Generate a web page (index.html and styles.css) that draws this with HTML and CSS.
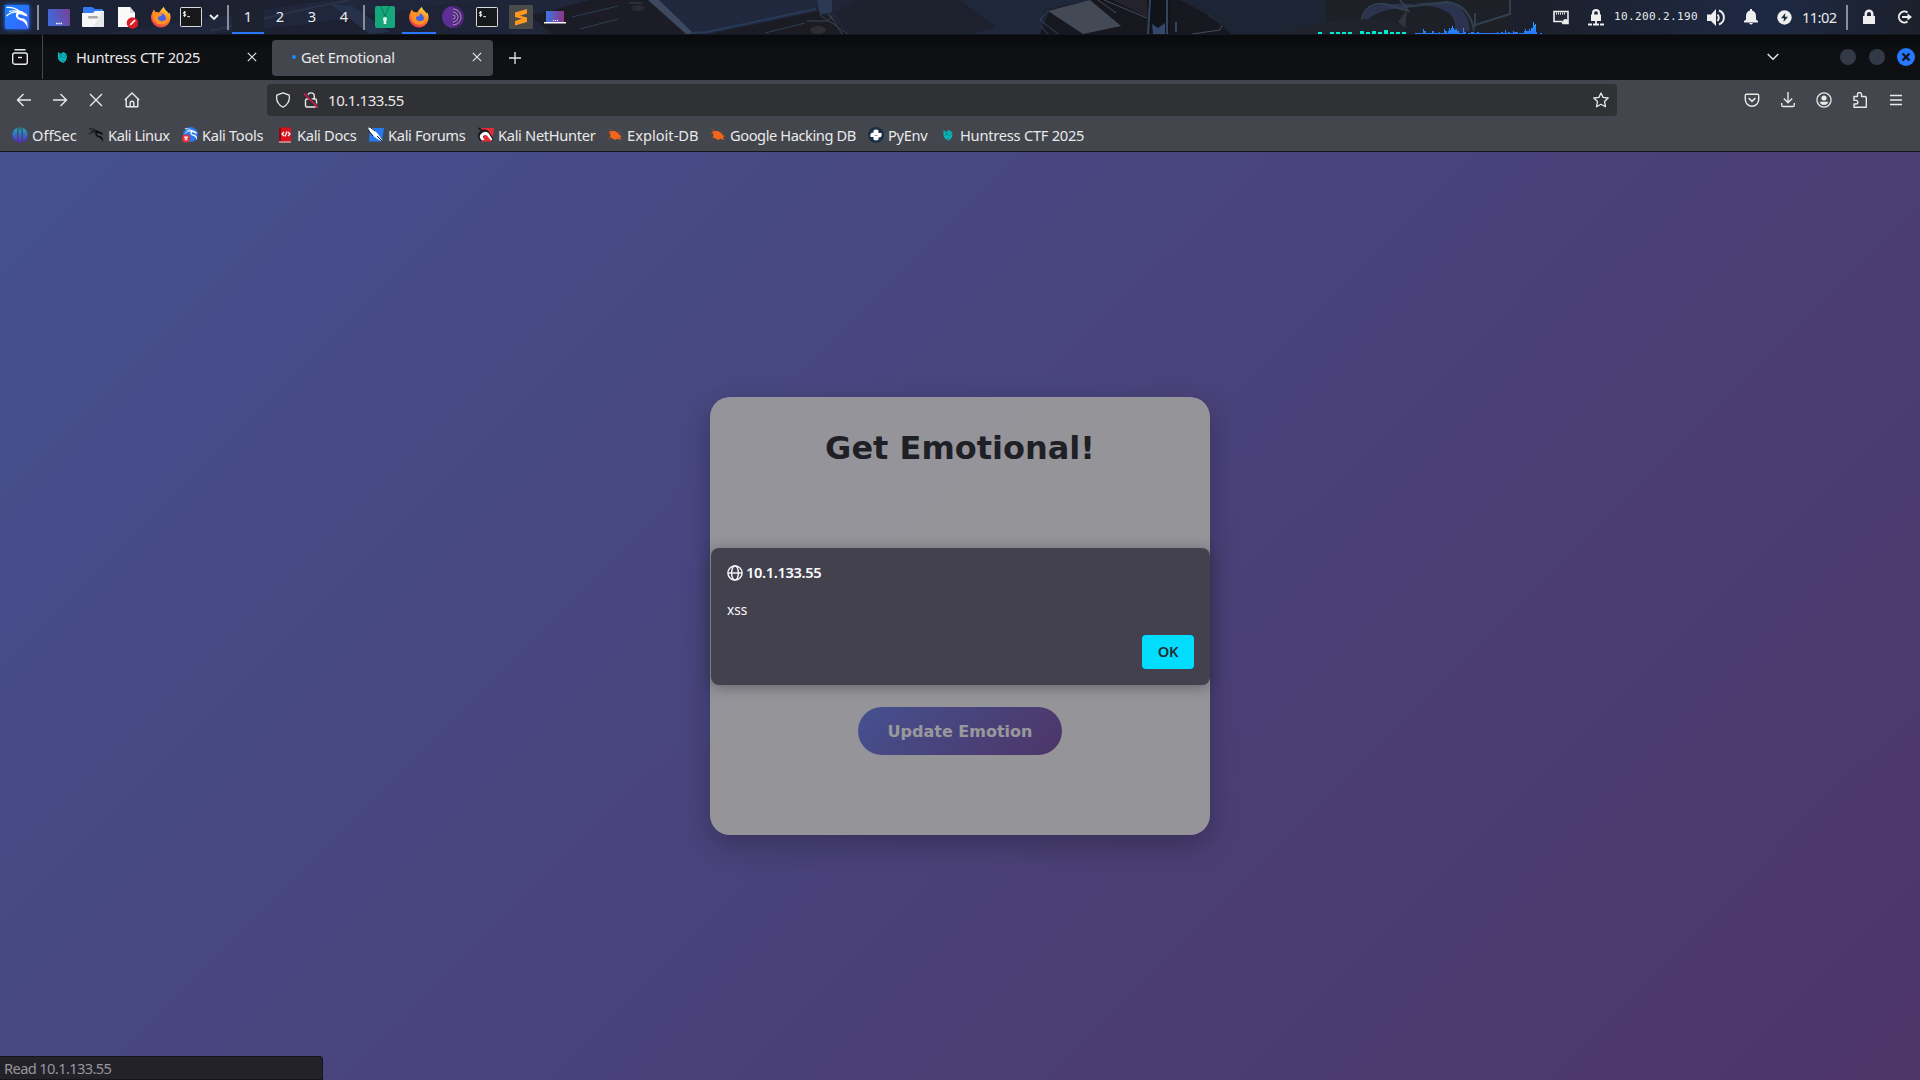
FILE: index.html
```html
<!DOCTYPE html>
<html lang="en">
<head>
<meta charset="utf-8">
<title>Get Emotional</title>
<link rel="stylesheet" href="styles.css">
</head>
<body>
<svg width="0" height="0" class="defs" aria-hidden="true">
  <defs>
    <linearGradient id="gBlue" x1="0" y1="0" x2="1" y2="1"><stop offset="0" stop-color="#1682ff"/><stop offset="1" stop-color="#3a66ff"/></linearGradient>
    <linearGradient id="gDesk" x1="0" y1="0.6" x2="1" y2="0.3"><stop offset="0" stop-color="#3f6bdc"/><stop offset="1" stop-color="#74429c"/></linearGradient>
    <linearGradient id="gLap" x1="0" y1="0" x2="1" y2="0"><stop offset="0" stop-color="#3c75e6"/><stop offset="1" stop-color="#8f3583"/></linearGradient>
    <linearGradient id="gFox" x1="0.8" y1="0" x2="0.3" y2="1"><stop offset="0" stop-color="#ffe14a"/><stop offset="0.45" stop-color="#ff8a24"/><stop offset="1" stop-color="#f23352"/></linearGradient>
    <linearGradient id="gOff" x1="0" y1="0" x2="0" y2="1"><stop offset="0" stop-color="#13b3b9"/><stop offset="1" stop-color="#5c22d0"/></linearGradient>
    <linearGradient id="gNet" x1="0" y1="0" x2="0" y2="1"><stop offset="0" stop-color="#22a2ff"/><stop offset="1" stop-color="#2777ff"/></linearGradient>
    <linearGradient id="gWall" x1="0" y1="0" x2="1" y2="0"><stop offset="0" stop-color="#1d2439"/><stop offset="0.15" stop-color="#1c2030"/><stop offset="0.3" stop-color="#20273b"/><stop offset="0.5" stop-color="#1f2434"/><stop offset="0.8" stop-color="#1c202c"/><stop offset="0.92" stop-color="#1d2943"/><stop offset="1" stop-color="#1c202c"/></linearGradient>
    <symbol id="dragon" viewBox="0 0 24 24"><path d="M1.500 2.500Q9 2 14.500 6.500M4 6.500Q9 5 14 6.500M1.500 11Q6 6.500 14 7" fill="none" stroke="currentColor" stroke-width="1.200"/><path d="M13 5.500Q17 5.500 18 7L21.500 9 22.500 11.500 20.500 11 17.500 10 16.500 9.500Q13.500 8.500 13 10.500 13 12.500 16 13 21.500 13.500 22.300 18.500L22.500 23Q21 18 17.500 16 12 14.500 11 11.500 10.300 8 13 5.500Z" fill="currentColor"/></symbol>
    <symbol id="firefox" viewBox="0 0 22 22"><path d="M11 21.500A10 10 0 0 1 1 11.500C1 8 2.600 6 3.800 3.500L5.500 6 9 6.500C10.500 5.500 11 3 14 .800 14 3.500 17.500 5 18.500 7.500L19.500 6.500C22.500 13 19 21.500 11 21.500Z" fill="url(#gFox)"/><circle cx="11.300" cy="12.200" r="4.600" fill="#4364e6"/><path d="M3 7Q6 5.500 9 7L12.500 8.700 10 10.500 8 10.700Q7.300 14 11 15 15 16 18 12 17 19 11 19 3.500 18 3 10Z" fill="#ff9125"/></symbol>
    <symbol id="terminal" viewBox="0 0 22 20"><rect x="0.500" y="0.500" width="21" height="19" rx="0.800" fill="#171819" stroke="#d8d9da"/><path d="M6 5.200H4.200Q3.300 5.200 3.300 6T4.200 6.900 5.800 7.600 5 8.600H3.200M4.600 4V10M7.200 9.700H10" stroke="#eee" fill="none" stroke-width="1"/></symbol>
    <symbol id="cross" viewBox="0 0 12 12"><path d="M1 1L11 11M11 1L1 11" stroke="currentColor" fill="none" stroke-width="1.400"/></symbol>
    <symbol id="padlock" viewBox="0 0 14 16"><path d="M1 7H2.500V5A4.500 4.500 0 0 1 11.500 5V7H13V15H1ZM5 7H9V5A2 2 0 0 0 5 5Z" fill="currentColor" fill-rule="evenodd"/></symbol>
    <symbol id="huntress" viewBox="0 0 12 14"><path d="M1 1L4 3 7 1 10 3 11 6 10 10 7 13 3 11 1 8Z" fill="#09b9bc"/><path d="M2 3L5 5 7 3M2 7L5 6 8 8M5 10L8 11M9 4V7" stroke="#087780" fill="none"/></symbol>
    <symbol id="exploit" viewBox="0 0 16 14"><path d="M2 3.500L5 3 8 3 11 5 13 7.500 15.500 8 13 9 14 12 10.500 10.800 8 12 4.500 10 2.500 9.500 3.500 7Z" fill="#f2661c"/><path d="M2 1L5 3M0 5L3 5.500M12 3L12 6M1 11L4 9" stroke="#8a4a30" fill="none"/></symbol>
  </defs>
</svg>

<header class="taskbar">
  <svg class="wallpaper" viewBox="0 0 1920 34" preserveAspectRatio="none">
    <rect width="1920" height="34" fill="url(#gWall)"/>
    <path d="M95 35L330 0H480L300 25 200 35Z" fill="#20273c"/>
    <path d="M210 31L310 8 350 0" stroke="#2a3248" stroke-width="2" fill="none"/>
    <path d="M330 4L352 6 390 32 370 34Z" fill="#26314b"/>
    <path d="M530 16L590 0H648L686 34H552Z" fill="#1b1c25"/>
    <path d="M650 0L692 34H707L817 8V0Z" fill="#1f283c"/>
    <path d="M648 0L686 34H694L659 0Z" fill="#3c495e"/>
    <path d="M690 33L707 32 816 9" stroke="#293a57" stroke-width="2" fill="none"/>
    <path d="M710 34L820 11 850 34Z" fill="#1a1b23"/>
    <path d="M572 17L618 6M580 29L618 19M765 33L805 23" stroke="#2c4054" fill="none"/>
    <path d="M629 3H642M807 21H828L832 16M820 15L848 34M829 14L842 34" stroke="#3d4450" stroke-width="1" fill="none"/>
    <ellipse cx="638" cy="8" rx="7" ry="3" fill="#2b2a33"/><ellipse cx="818" cy="30" rx="8" ry="4" fill="#302c34"/>
    <path d="M817 0H832V12L820 15Z" fill="#2c3953"/>
    <path d="M835 12L860 0H960L995 27 970 34H849Z" fill="#1c212d"/>
    <path d="M960 0H1090L1045 9 1040 34H972L996 27Z" fill="#1f273a"/>
    <path d="M1040 34L1050 10 1090 0H1190L1208 15 1232 34Z" fill="#17181f"/>
    <path d="M1048 11L1090 0 1121 26 1083 34Z" fill="#444956"/>
    <path d="M1048 11L1040 20 1058 34M1041 26L1048 34" stroke="#384458" fill="none"/>
    <path d="M1098 0L1116 13M1104 0L1147 18M1192 34L1220 30 1222 25 1208 15" stroke="#464c58" stroke-width="1" fill="none"/>
    <path d="M1113 0L1147 17V0Z" fill="#24232b"/>
    <path d="M1147 0H1170V34H1151Z" fill="#11131b"/><path d="M1152 24L1158 28 1165 23V34H1153Z" fill="#34466b"/>
    <path d="M1150 0L1148 34M1167 0V34M1176 22V32" stroke="#33445f" stroke-width="2" fill="none"/>
    <path d="M1180 0H1325V34H1232L1208 15Z" fill="#1d2433"/>
    <path d="M1326 0H1510V34H1325Z" fill="#1e2028"/>
    <path d="M1364 17Q1366 7 1380 5T1414 4L1406 9Q1384 6 1364 22ZM1414 3L1450 2Q1468 8 1470 31L1454 34Q1460 13 1435 7Z" fill="#2b334f"/>
    <path d="M1361 22Q1365 2 1385 4L1408 11 1400 0M1405 7L1447 2Q1470 5 1474 31M1475 25L1510 14V0M1475 13V27" stroke="#31404f" stroke-width="2" fill="none"/>
    <path d="M1407 11L1405 28 1398 22 1404 14" fill="#34343c"/>
    <path d="M1282 34L1325 22 1388 18 1404 28V34Z" fill="#20222c"/>
    <path d="M1318 32h4v2h-4zm12 0h4v2h-4zm6 0h4v2h-4zm6 0h4v2h-4zm6 0h4v2h-4zm12-1h4v3h-4zm6 1h4v2h-4zm6-1h4v3h-4zm6 1h4v2h-4zm6-2h4v4h-4zm6 2h4v2h-4zm6 0h4v2h-4zm6 0h4v2h-4z" fill="#00ead2"/>
    <path d="M1415 34V33H1423V29H1424V31H1426V33H1432V31H1434V33H1439V32H1440V33H1444V29H1445V31H1447V33H1448V31H1449V28H1450V30H1451V28H1452V26H1453V28H1454V30L1457 29V31H1459V33H1463V28H1464V32H1466V34ZM1468 34V33H1471V32H1474V33H1477V32H1479V33H1497V32H1498V33H1501V32H1503V33H1505V30H1506V33L1510 32V33H1513V31H1514V32H1518V34ZM1519 34V33H1524V31H1525V29H1526V31H1529V29H1530V31H1531V28H1533V22H1534V25H1535V24H1536V32H1537V34ZM1540 33H1542V34H1540Z" fill="url(#gNet)"/>
  </svg>
  <div class="slot"><svg class="kali" viewBox="0 0 24 24"><rect width="24" height="24" rx="1" fill="url(#gBlue)"/><use href="#dragon" width="24" height="24" color="#fff"/></svg></div>
  <i class="sep"></i>
  <div class="slot"><svg width="22" height="18" viewBox="0 0 22 18"><rect y="1" width="22" height="17" rx="1" fill="url(#gDesk)"/><path d="M8 15.500h1.500m.800 0h1.500m.800 0h1.500" stroke="#fff" stroke-width="1.500"/></svg></div>
  <div class="slot"><svg width="22" height="20" viewBox="0 0 22 20"><path d="M1 6V1Q1 0 2 0H10L13 2H20Q21 2 21 3V6Z" fill="#347af2"/><path d="M0 6H11L13 4H22V19Q22 20 21 20H1Q0 20 0 19Z" fill="#f6f6f7"/><path d="M20 5L11 20H21L22 19V5Z" fill="#e8e8e9"/><rect x="6" y="9" width="10" height="2.500" rx="1.200" fill="#a7a7ab"/></svg></div>
  <div class="slot slot-doc"><svg width="20" height="24" viewBox="0 0 20 24"><path d="M0 2H12L17 8V22H0Z" fill="#fafafa"/><path d="M12 2V8H17Z" fill="#d7d7d9"/><circle cx="14.500" cy="18" r="5.800" fill="#d81c25"/><path d="M11.500 20.500L12.500 18.500 16.500 14.500 17.700 15.700 13.500 19.700Z" fill="#fff"/></svg></div>
  <div class="slot"><svg width="22" height="22"><use href="#firefox"/></svg></div>
  <div class="slot slot-term"><svg width="22" height="20"><use href="#terminal"/></svg></div>
  <div class="slot slot-arrow"><svg width="10" height="6" viewBox="0 0 10 6"><path d="M1 1L5 5 9 1" fill="none" stroke="#eee" stroke-width="1.800"/></svg></div>
  <i class="sep"></i>
  <span class="ws current">1</span><span class="ws">2</span><span class="ws">3</span><span class="ws">4</span>
  <i class="sep"></i>
  <div class="slot"><svg width="20" height="22" viewBox="0 0 20 22"><rect width="20" height="22" rx="2" fill="#15a67c"/><path d="M6 0L9.500 9V12M14 0L10.500 9V12" fill="none" stroke="#0b7456" stroke-dasharray="1.500 .800" stroke-width="1.300"/><path d="M10 12V18" stroke="#dff5ee" stroke-width="2.600"/><circle cx="10" cy="13" r="2" fill="#dff5ee"/></svg></div>
  <div class="slot running"><svg width="22" height="22"><use href="#firefox"/></svg></div>
  <div class="slot"><svg width="22" height="22" viewBox="0 0 22 22"><circle cx="11" cy="11" r="11" fill="#5d2f94"/><path d="M11 0A11 11 0 0 1 11 22Z" fill="#482470"/><path d="M11 3A8 8 0 0 1 11 19M11 6A5 5 0 0 1 11 16M11 9A2 2 0 0 1 11 13" fill="none" stroke="#9c77b8" stroke-width="1.300"/></svg></div>
  <div class="slot"><svg width="22" height="20"><use href="#terminal"/></svg></div>
  <div class="slot"><svg width="24" height="24" viewBox="0 0 24 24"><rect width="24" height="24" rx="1" fill="#4a4a4b"/><path d="M6 7.500L18 4V8.500L11 10.800 18 12.500V17L6 20.500V16L13 13.800 6 12Z" fill="#ff981c"/></svg></div>
  <div class="slot"><svg width="22" height="14" viewBox="0 0 22 14"><rect x="2" y="1" width="18" height="11" fill="url(#gLap)"/><path d="M9 10.500h1m1 0h1m1 0h1" stroke="#fff"/><rect y="12" width="22" height="1.500" fill="#f5f5f8"/></svg></div>

  <div class="tray">
    <svg width="16" height="15" viewBox="0 0 16 15"><path d="M1 1.500H15V13.500H10L9 11.500H1Z" fill="#252a36" stroke="#eee" stroke-width="1.600"/><path d="M3 3.500h10" stroke="#eee" stroke-width="2" stroke-dasharray="1 1"/><circle cx="12.500" cy="11.500" r="2.500" fill="#eee"/></svg>
    <svg class="vpn" width="16" height="17" viewBox="0 0 16 17"><path d="M3 5.500H4V4A4 4 0 0 1 12 4V5.500H13V12H3ZM6.200 5.500H9.800V4A1.800 1.800 0 0 0 6.200 4Z" fill="#eee" fill-rule="evenodd"/><path d="M0 15.500H4M5 15.500H11M12 15.500H16M8 12V15" stroke="#eee" stroke-width="1.800"/></svg>
    <span class="ip">10.200.2.190</span>
    <svg class="sound" width="18" height="17" viewBox="0 0 18 17"><path d="M0 5.500H4L9 0V17L4 12H0Z" fill="#eee"/><path d="M10.500 5.500Q13 8.500 10.500 12M12 1.500C18.500 4 18.500 13 12 15.500" stroke="#eee" fill="none" stroke-width="1.900"/></svg>
    <svg class="bell" width="14" height="16" viewBox="0 0 14 16"><path d="M6 0H8V1.500Q12 2.500 12 7V10.500L14 12V13.500H0V12L2 10.500V7Q2 2.500 6 1.500ZM5 14H9Q7 17 5 14" fill="#eee"/></svg>
    <svg class="power" width="15" height="15" viewBox="0 0 15 15"><circle cx="7.500" cy="7.500" r="7.200" fill="#eee"/><path d="M8.300 3L4 8.200H7L6.500 12 11 6.700H8Z" fill="#1d2740"/></svg>
    <span class="clock">11:02</span>
    <i class="sep"></i>
    <svg class="lock" width="14" height="16"><use href="#padlock"/></svg>
    <svg class="logout" width="15" height="14" viewBox="0 0 15 14"><path d="M10.500 2.500A5.500 5.500 0 1 0 10.500 11.500" stroke="#eee" fill="none" stroke-width="1.900"/><path d="M5 6H10.500V3.500L15 7 10.500 10.500V8H5Z" fill="#eee"/></svg>
  </div>
</header>

<nav class="tabs">
  <div class="tabs-view"><svg width="16" height="16" viewBox="0 0 16 16"><path d="M3 .800H13" stroke="currentColor" stroke-width="1.400" stroke-linecap="round"/><rect x=".700" y="4" width="14.600" height="11.200" rx="2" fill="none" stroke="currentColor" stroke-width="1.400"/><path d="M6 8.500H10" stroke="currentColor" stroke-width="1.400"/></svg></div>
  <div class="tab"><svg class="fav" width="11" height="13"><use href="#huntress"/></svg><span class="s2">Huntress CTF 2025</span><svg class="x" width="10" height="10"><use href="#cross"/></svg></div>
  <div class="tab active"><i class="dot"></i><span class="s3">Get Emotional</span><svg class="x" width="10" height="10"><use href="#cross"/></svg></div>
  <svg class="plus" width="12" height="12" viewBox="0 0 12 12"><path d="M6 0V12M0 6H12" stroke="currentColor" stroke-width="1.300"/></svg>
  <div class="window">
    <svg width="12" height="8" viewBox="0 0 12 8"><path d="M.700 1L6 6.300 11.300 1" fill="none" stroke="currentColor" stroke-width="1.400"/></svg>
    <i class="circle first"></i><i class="circle"></i>
    <svg class="win-close" width="18" height="18" viewBox="0 0 18 18"><circle cx="9" cy="9" r="9" fill="#2777ff"/><path d="M5.500 5.500L12.500 12.500M12.500 5.500L5.500 12.500" stroke="#10131c" stroke-width="2.300"/></svg>
  </div>
</nav>

<div class="toolbar">
  <div class="navs">
    <svg viewBox="0 0 16 16"><path d="M15 8H1.500M7.500 2L1.500 8 7.500 14" fill="none" stroke="currentColor" stroke-width="1.400"/></svg>
    <svg viewBox="0 0 16 16"><path d="M1 8H14.500M8.500 2L14.500 8 8.500 14" fill="none" stroke="currentColor" stroke-width="1.400"/></svg>
    <svg viewBox="0 0 16 16"><path d="M2 2L14 14M14 2L2 14" fill="none" stroke="currentColor" stroke-width="1.400"/></svg>
    <svg viewBox="0 0 16 16"><path d="M.800 8L8 1 15.200 8M2.200 7V14.800H13.800V7M6.200 14.500V11A1.800 1.800 0 0 1 9.800 11V14.500" fill="none" stroke="currentColor" stroke-width="1.400" stroke-linejoin="round"/></svg>
  </div>
  <div class="urlbar">
    <svg viewBox="0 0 16 16"><path d="M8 .800L14.200 3.200Q15.500 11 8 15.200 .500 11 1.800 3.200Z" fill="none" stroke="currentColor" stroke-width="1.300" stroke-linejoin="round"/></svg>
    <svg class="insecure" viewBox="0 0 16 16"><rect x="2.500" y="7" width="11" height="8" rx="1.500" fill="none" stroke="currentColor" stroke-width="1.400"/><path d="M4.700 7V4.200A3.300 3.300 0 0 1 11.300 4.200V7" fill="none" stroke="currentColor" stroke-width="1.400"/><path d="M1 1L15 15" stroke="#303135" stroke-width="3"/><path d="M1 1.500L15 15.500" stroke="#e21b49" stroke-width="1.400"/></svg>
    <span class="url">10.1.133.55</span>
    <svg class="star" viewBox="0 0 16 16"><path d="M8 1L10.100 5.400 15.200 6 11.500 9.500 12.500 14.700 8 12.300 3.500 14.700 4.500 9.500 .800 6 5.900 5.400Z" fill="none" stroke="currentColor" stroke-width="1.300" stroke-linejoin="round"/></svg>
  </div>
  <div class="tools">
    <svg viewBox="0 0 16 16"><path d="M2.500 2.200H13.500Q14.700 2.200 14.700 3.500V7.500A6.700 6.700 0 0 1 1.300 7.500V3.500Q1.300 2.200 2.500 2.200Z" fill="none" stroke="currentColor" stroke-width="1.400"/><path d="M4.600 6L8 9.300 11.400 6" fill="none" stroke="currentColor" stroke-width="1.700"/></svg>
    <svg viewBox="0 0 16 16"><path d="M8 0V10.500M3.800 6.500L8 10.700 12.200 6.500M1.700 11V13Q1.700 14.500 3.200 14.500H12.800Q14.300 14.500 14.300 13V11" fill="none" stroke="currentColor" stroke-width="1.400"/></svg>
    <svg viewBox="0 0 16 16"><circle cx="8" cy="8" r="7.100" fill="none" stroke="currentColor" stroke-width="1.300"/><circle cx="8" cy="6" r="2.600" fill="currentColor"/><path d="M3.800 9.800H12.200Q11.500 13 8 13T3.800 9.800Z" fill="currentColor"/></svg>
    <svg viewBox="0 0 16 16"><path d="M5.500 4.500V2.500A2 2 0 0 1 9.500 2.500V4.500H13Q14.300 4.500 14.300 5.800V15.200H2V12H4A1.800 1.800 0 0 0 4 8.400H2V4.500Z" fill="none" stroke="currentColor" stroke-width="1.400" stroke-linejoin="round"/></svg>
    <svg viewBox="0 0 16 16"><path d="M2 3.500H14M2 8H14M2 12.500H14" stroke="currentColor" stroke-width="1.300"/></svg>
  </div>
</div>

<div class="bookmarks">
  <span class="bm"><svg viewBox="0 0 16 16"><circle cx="8" cy="8" r="7.700" fill="url(#gOff)"/><path d="M5.800 0V16M10.200 0V16M8 0V3" stroke="#44464d" stroke-width="1.200"/></svg><span>OffSec</span></span>
  <span class="bm"><svg viewBox="0 0 16 16" color="#0b0c0f"><use href="#dragon" width="16" height="16"/></svg><span class="s4">Kali Linux</span></span>
  <span class="bm b3"><svg viewBox="0 0 16 16"><circle cx="8.500" cy="7.500" r="7.400" fill="#2678ee"/><use href="#dragon" x="2" width="14" height="14" color="#fff"/><circle cx="4" cy="11.500" r="4" fill="#ef2b36"/><path d="M2 10H6M3.300 10V13.500M4.800 10V13.500" stroke="#fff" fill="none"/></svg><span class="s3">Kali Tools</span></span>
  <span class="bm b4"><svg viewBox="0 0 16 16"><path d="M2 .500H14V15.500H2Z" fill="#d9121d"/><path d="M2 .500H4V14H2Z" fill="#850d16"/><path d="M2 15H14" stroke="#ddd"/><path d="M7 5L5 7 7 9M11 5L13 7 11 9M10 4.500L8 9.500" stroke="#fff" fill="none" stroke-width="1.300"/></svg><span class="s3">Kali Docs</span></span>
  <span class="bm b5"><svg viewBox="0 0 16 16"><path d="M2 1L16 1 14 14.500 1 14.500Z" fill="#267af0"/><path d="M0 .500L4.500 1.500 10 7 13 11.500 15 14.500 10 12.500 6 9.500 2 5Z" fill="#fff"/><path d="M0 3L5 9M3 1L7 4M9 9L15 15" stroke="#18202e" stroke-width="1"/></svg><span class="s3">Kali Forums</span></span>
  <span class="bm b6"><svg viewBox="0 0 16 16"><path d="M3 1L16 1 14 14.500 2 14.500Z" fill="#e32a36"/><path d="M0 1L5 4" stroke="#17191d" stroke-width="1.500"/><path d="M3 14.500A6 6 0 0 1 10 3.500L15.500 11.500 14 14.500 11 10 8.500 8A2.500 2.500 0 0 0 6 12Z" fill="#17191d"/><path d="M4 13.500Q.500 10.500 2.500 7.500 6 3 10.500 6L14.500 12.500 13 13.500 9 8.500Q6 7 5 9.500 5 11 6.500 12.500Z" fill="#fff"/></svg><span class="s3">Kali NetHunter</span></span>
  <span class="bm b7"><svg viewBox="0 0 16 16"><use href="#exploit" y="1" width="16" height="14"/></svg><span>Exploit-DB</span></span>
  <span class="bm b8"><svg viewBox="0 0 16 16"><use href="#exploit" y="1" width="16" height="14"/></svg><span class="s4">Google Hacking DB</span></span>
  <span class="bm b9"><svg viewBox="0 0 16 16"><circle cx="8" cy="8" r="8" fill="#173047"/><path d="M5.500 3.500Q8 1.500 10.500 3.500V8H6.500V10H2.500Q1.500 5.500 5.500 5.500ZM10.500 12.500Q8 14.500 5.500 12.500V8.500H9.500V6H13.500Q14.500 10.500 10.500 10.500Z" fill="#fff"/></svg><span class="s3">PyEnv</span></span>
  <span class="bm b10"><svg viewBox="0 0 16 16"><use href="#huntress" x="2.500" y="2" width="11" height="12.500"/></svg><span class="s2">Huntress CTF 2025</span></span>
</div>

<main class="page">
  <section class="card">
    <h1>Get Emotional!</h1>
    <button class="update">Update Emotion</button>
  </section>
  <div class="backdrop"></div>
  <div class="dialog" role="alertdialog">
    <div class="origin"><svg width="16" height="16" viewBox="0 0 16 16"><g fill="none" stroke="currentColor" stroke-width="1.400"><circle cx="8" cy="8" r="7.100"/><ellipse cx="8" cy="8" rx="3.400" ry="7.100"/><path d="M1 8H15"/></g></svg><span>10.1.133.55</span></div>
    <p>xss</p>
    <button class="ok">OK</button>
  </div>
  <div class="status"><span>Read 10.1.133.55</span></div>
</main>
</body>
</html>
```
FILE: styles.css
```css
* { box-sizing: border-box; }
body {
  margin: 0;
  width: 1920px;
  height: 1080px;
  overflow: hidden;
  display: flex;
  flex-direction: column;
  font-family: "Noto Sans", sans-serif;
  font-size: 14.67px;
  line-height: 20px;
  color: #e9e9ea;
  background: #0c0d11;
}
svg { display: block; flex: none; }
.defs { position: absolute; }
span { white-space: nowrap; }
.s2 { letter-spacing: -0.25px; }
.s3 { letter-spacing: -0.32px; }
.s4 { letter-spacing: -0.43px; }

/* desktop panel */
.taskbar { position: relative; height: 35px; flex: none; display: flex; align-items: center; padding-bottom: 1px; background: #16181f; }
.taskbar > *:not(.wallpaper) { position: relative; }
.wallpaper { position: absolute; left: 0; top: 0; width: 1920px; height: 34px; }
.slot { width: 34px; height: 34px; flex: none; display: flex; align-items: center; justify-content: center; }
.slot-doc { padding-left: 2px; }
.slot-term { width: 26px; }
.slot-arrow { width: 20px; }
.kali { width: 24px; height: 24px; filter: drop-shadow(0 0 2px #2777ff); }
.sep { width: 2px; height: 25px; flex: none; margin: 0 3px; background: #8b8e95; }
.ws { width: 32px; height: 34px; line-height: 33px; text-align: center; }
.current { background: #1d2231; }
.current, .running { box-shadow: inset 0 -2px #2777ff; }
.tray { display: flex; align-items: center; margin-left: auto; padding-right: 8px; }
.vpn { margin-left: 19px; }
.ip { margin-left: 10px; width: 84px; font: 11px/20px "DejaVu Sans Mono", monospace; letter-spacing: 0.38px; margin-top: -1px; }
.sound { margin-left: 9px; }
.bell { margin-left: 19px; }
.power { margin-left: 19px; }
.clock { margin-left: 10px; width: 34px; letter-spacing: -0.6px; margin-top: -1px; }
.tray .sep { margin: 0 14px 0 10px; }
.lock { color: #eee; }
.logout { margin-left: 21px; }

/* tab strip */
.tabs { height: 45px; flex: none; display: flex; align-items: center; padding-bottom: 1px; background: linear-gradient(#090a0d, #0f1014 40%); }
.tabs-view { width: 43px; height: 44px; flex: none; border-right: 1px solid #46474b; display: flex; align-items: center; padding-left: 12px; }
.tab { width: 221px; height: 36px; flex: none; display: flex; align-items: center; margin-top: 1px; padding: 0 11px 1px 14px; border-radius: 4px; margin-right: 8px; }
.tab .x { margin-left: auto; }
.tab:not(.active) { padding-right: 7px; }
.fav { margin-right: 8px; }
.tab.active { background: #44464d; padding-left: 20px; margin-right: 1px; }
.dot { width: 4px; height: 4px; border-radius: 50%; background: #128cff; margin-right: 5px; }
.plus { margin: 1px 0 0 15px; }
.window { margin-left: auto; display: flex; align-items: center; padding-right: 5px; }
.circle { width: 16px; height: 16px; border-radius: 50%; background: #343947; margin-left: 13px; }
.first { margin-left: 61px; }
.win-close { margin-left: 12px; }

/* navigation toolbar */
.toolbar { height: 40px; flex: none; display: flex; align-items: center; background: #44464d; }
.toolbar svg { width: 16px; height: 16px; }
.navs { width: 267px; display: flex; gap: 20px; padding-left: 16px; }
.urlbar { width: 1350px; height: 32px; display: flex; align-items: center; border-radius: 4px; background: #303135; padding: 0 8px; font-size: 15px; }
.insecure { margin-left: 12px; }
.url { margin-left: 9px; letter-spacing: -0.44px; }
.star { margin-left: auto; }
.tools { margin-left: auto; display: flex; gap: 20px; padding-right: 16px; }

/* bookmarks bar */
.bookmarks { height: 32px; flex: none; display: flex; align-items: center; padding: 0 0 1px 12px; background: #44464d; border-bottom: 1px solid #16171b; }
.bm { width: 76px; flex: none; display: flex; align-items: center; gap: 4px; }
.bm svg { width: 16px; height: 16px; }
.bm > span { margin-top: -1px; }
.b3 { margin-left: 18px; width: 95px; }
.b4 { width: 91px; }
.b5 { width: 110px; }
.b6 { width: 129px; }
.b7 { width: 103px; }
.b8 { width: 158px; }
.b9 { width: 72px; }
.b10 { width: 160px; }

/* page */
.page { position: relative; height: 928px; flex: none; display: flex; align-items: center; justify-content: center; background: linear-gradient(135deg, #667eea, #764ba2); }
.card { width: 500px; height: 438px; border-radius: 20px; background: rgba(255, 255, 255, 0.95); box-shadow: 0 10px 30px rgba(0, 0, 0, 0.3); font-family: "DejaVu Sans", sans-serif; display: flex; flex-direction: column; align-items: center; }
h1 { margin: 32px 0 0; font-size: 32px; line-height: 38px; font-weight: 700; color: #212529; }
.update { margin-top: 240px; width: 204px; height: 48px; flex: none; border: 0; border-radius: 25px; padding: 1px 0 0; background: linear-gradient(135deg, #667eea, #764ba2); color: #fff; font: 700 16px/24px "DejaVu Sans", sans-serif; }
.backdrop { position: absolute; inset: 0; background: rgba(28, 27, 34, 0.45); }
.dialog { position: absolute; left: 711px; top: 396px; width: 499px; height: 137px; border-radius: 8px; background: #42414d; box-shadow: 0 2px 14px rgba(28, 27, 34, 0.4); padding: 16px; display: flex; flex-direction: column; color: #fbfbfe; }
.origin { display: flex; align-items: center; gap: 3px; font-weight: 600; height: 17px; letter-spacing: -0.35px; }
.origin span { margin-top: -1px; }
.dialog p { margin: 19px 0 0; font-size: 13.6px; line-height: 20px; }
.ok { width: 52px; height: 34px; margin: 15px 0 0 auto; border: 0; border-radius: 4px; background: #00ddff; color: #2b2a33; font: 600 14.67px/20px "Noto Sans", sans-serif; padding: 0 0 2px; letter-spacing: -0.3px; }
.status { position: absolute; left: 0; bottom: 0; width: 323px; height: 24px; background: #23222b; border: 1px solid #15141a; border-width: 1px 1px 1px 0; border-radius: 0 4px 0 0; color: #97969b; padding-left: 4px; line-height: 23px; letter-spacing: -0.62px; }
```
